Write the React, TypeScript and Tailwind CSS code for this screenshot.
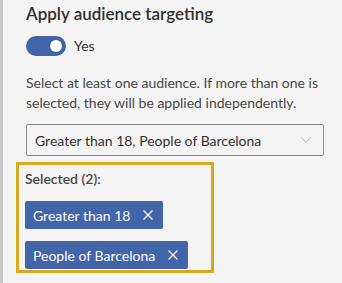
import { ChevronDown } from 'lucide-react'

const SELECTED = ['Greater than 18', 'People of Barcelona']

function CloseIcon() {
  return (
    <svg width="10" height="10" viewBox="0 0 10 10" fill="none" stroke="currentColor" strokeWidth="1.3">
      <path d="M0.5 0.5 L9.5 9.5 M9.5 0.5 L0.5 9.5" />
    </svg>
  )
}

export default function App() {
  return (
    <div className="flex h-[283px] w-[342px] bg-[#f4f4f4] font-['Lato',sans-serif] text-[#323130]">
      <div className="w-[3px] shrink-0 bg-[#c8c6c4]" />
      <div className="flex-1 pl-[23px] pr-[18px] pt-[2px]">
        <h2 className="text-[17px] font-semibold leading-6 text-[#323130]">
          Apply audience targeting
        </h2>

        <div className="mt-[10px] flex items-center gap-2">
          <button className="flex h-5 w-10 items-center justify-end rounded-full bg-[#4264a8] pr-1">
            <span className="h-3 w-3 rounded-full bg-white" />
          </button>
          <span className="text-[14px] leading-5">Yes</span>
        </div>

        <p className="mt-[17px] text-[14px] leading-5 text-[#484644]">
          Select at least one audience. If more than one is selected, they will be applied
          independently.
        </p>

        <div className="mt-[11px] flex h-8 items-center justify-between rounded-[2px] border border-[#8a8886] pl-2 pr-[8px] text-[14px]">
          <span>Greater than 18, People of Barcelona</span>
          <ChevronDown className="h-[18px] w-[18px] text-[#a19f9d]" strokeWidth={1.1} />
        </div>

        <div className="-ml-[10px] mt-[6px] w-[198px] border-[3px] border-[#d8a81f] px-[6px] pb-[1px] pt-[4px]">
          <p className="text-[14px] font-semibold leading-5 text-[#484644]">Selected (2):</p>
          <div className="mt-[12px] flex flex-col items-start gap-3">
            {SELECTED.map((s) => (
              <span
                key={s}
                className="flex h-7 items-center gap-[13px] rounded-[2px] bg-[#4264a8] pl-2 pr-[10px] text-[14px] text-white"
              >
                {s}
                <CloseIcon />
              </span>
            ))}
          </div>
        </div>
      </div>
    </div>
  )
}
